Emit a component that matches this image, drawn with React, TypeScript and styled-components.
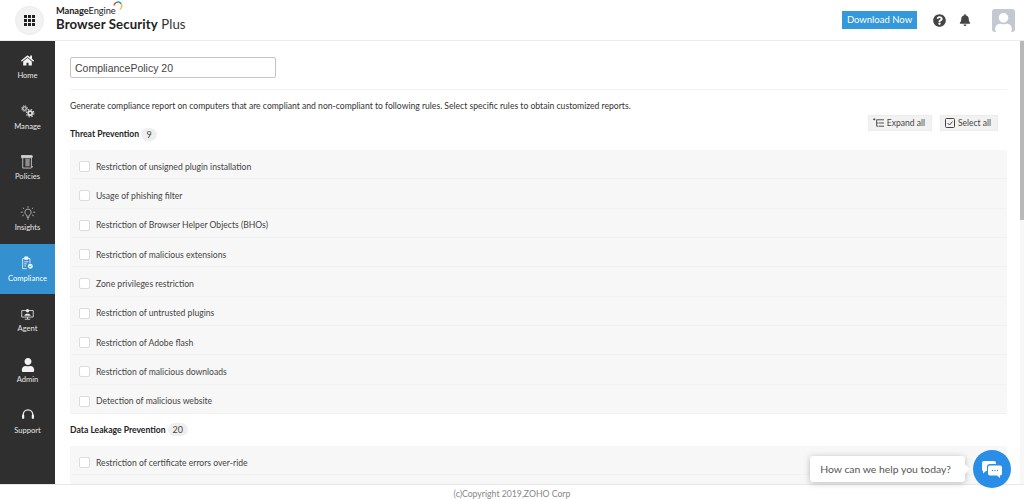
import React, { FC } from 'react'
import styled, { createGlobalStyle } from 'styled-components'
import { FaHome, FaUser, FaQuestionCircle, FaBell } from 'react-icons/fa'

const threatRules = [
  'Restriction of unsigned plugin installation',
  'Usage of phishing filter',
  'Restriction of Browser Helper Objects (BHOs)',
  'Restriction of malicious extensions',
  'Zone privileges restriction',
  'Restriction of untrusted plugins',
  'Restriction of Adobe flash',
  'Restriction of malicious downloads',
  'Detection of malicious website',
]

const leakageRules = ['Restriction of certificate errors over-ride']

const ManageIcon: FC = () => (
  <svg width="14" height="13" viewBox="0 0 16 15" fill="none" stroke="#dedede">
    <circle cx="4" cy="4" r="2" strokeWidth="1.300" />
    <circle cx="4" cy="4" r="3.300" strokeWidth="1" strokeDasharray="1.300 1.300" />
    <circle cx="10.500" cy="9.500" r="2.300" strokeWidth="2" />
    <circle cx="10.500" cy="9.500" r="4.300" strokeWidth="1.300" strokeDasharray="1.700 1.700" />
  </svg>
)

const PoliciesIcon: FC = () => (
  <svg width="13" height="14" viewBox="0 0 15 16" fill="none" stroke="#cfcfcf" strokeWidth="1">
    <path d="M0.500 0.500h11.500a1 1 0 0 1 0 2.500H0.500z" fill="#cfcfcf" />
    <path d="M2 3v12h9.500l2-1.500H12V3" />
    <path d="M5 4h5v9H5z" fill="#8c8c8c" stroke="none" />
  </svg>
)

const InsightsIcon: FC = () => (
  <svg width="16" height="14" viewBox="0 0 20 17" fill="none" stroke="#c8c8c8" strokeWidth="1">
    <path d="M10 3.500a4 4 0 0 0-2.300 7.200c.5.5.6 1 .6 1.800h3.400c0-.8.100-1.300.6-1.800A4 4 0 0 0 10 3.500z" />
    <path d="M8.500 14.300h3M9 16h2M10 0v2M3.500 2l1.700 1.400M16.500 2l-1.700 1.400M1 7.500h2.500M16.500 7.500H19M3 12l2-1.200M17 12l-2-1.200" />
  </svg>
)

const ComplianceIcon: FC = () => (
  <svg width="13" height="14" viewBox="0 0 16 17" fill="none" stroke="#f2f7fb" strokeWidth="1">
    <path d="M7 15.500H2V3h9v6" />
    <path d="M4.500 1h4v3h-4z" fill="#f2f7fb" />
    <path d="M4 7h5M4 9.500h3M4 12h2" />
    <circle cx="11.500" cy="12.500" r="3" fill="#f2f7fb" stroke="none" />
    <path d="M10 12.500l1.200 1.100 1.800-2" stroke="#3590cf" />
  </svg>
)

const AgentIcon: FC = () => (
  <svg width="13" height="12" viewBox="0 0 17 15" fill="none" stroke="#d8d8d8" strokeWidth="1.200">
    <path d="M1 3h15v8.500H1z" />
    <circle cx="8.500" cy="3.200" r="2.200" fill="#e8e8e8" stroke="none" />
    <path d="M4.500 9.800c0-3.400 8-3.400 8 0z" fill="#e8e8e8" stroke="none" />
    <path d="M8.500 11.500v2.500M5 14.300h7" />
  </svg>
)

const SupportIcon: FC = () => (
  <svg width="12" height="12" viewBox="0 0 14 14" fill="none" stroke="#f0f0f0" strokeWidth="1.500">
    <path d="M1.500 7.500V6.500a5.500 5.500 0 0 1 11 0v1" />
    <rect x="0" y="6.500" width="2.600" height="5" rx="1" fill="#f0f0f0" stroke="none" />
    <rect x="11.400" y="6.500" width="2.600" height="5" rx="1" fill="#f0f0f0" stroke="none" />
  </svg>
)

const navItems = [
  { label: 'Home', icon: <FaHome size={13} color="#f2f2f2" /> },
  { label: 'Manage', icon: <ManageIcon /> },
  { label: 'Policies', icon: <PoliciesIcon /> },
  { label: 'Insights', icon: <InsightsIcon /> },
  { label: 'Compliance', icon: <ComplianceIcon />, active: true },
  { label: 'Agent', icon: <AgentIcon /> },
  { label: 'Admin', icon: <FaUser size={14} color="#f2f2f2" /> },
  { label: 'Support', icon: <SupportIcon /> },
]

const RuleList: FC<{ rules: string[]; open?: boolean }> = ({ rules, open }) => (
  <Panel $open={open}>
    {rules.map((rule) => (
      <Rule key={rule}>
        <Check />
        <span>{rule}</span>
      </Rule>
    ))}
  </Panel>
)

const App: FC = () => (
  <Page>
    <GlobalStyle />
    <Header>
      <AppsButton>
        <AppsGrid>
          {Array.from({ length: 9 }).map((_, i) => (
            <i key={i} />
          ))}
        </AppsGrid>
      </AppsButton>
      <Brand>
        <Maker>
          <b>Manage</b>Engine
          <svg width="10" height="10" viewBox="0 0 10 10" fill="none" strokeWidth="1.400">
            <path d="M1 4.500a4 4 0 0 1 2-2.800" stroke="#e0403a" />
            <path d="M3 1.700a4.500 4.500 0 0 1 3-.7" stroke="#36a85a" />
            <path d="M6 1a4.500 4.500 0 0 1 2.300 2" stroke="#2f8fd8" />
            <path d="M8.300 3a4.500 4.500 0 0 1-1.300 5.500" stroke="#f2c230" />
          </svg>
        </Maker>
        <Product>
          <b>Browser Security</b> Plus
        </Product>
      </Brand>
      <HeaderRight>
        <DownloadButton>Download Now</DownloadButton>
        <FaQuestionCircle size={13} color="#444" />
        <FaBell size={12} color="#444" />
        <Avatar>
          <FaUser size={19} color="#fff" />
        </Avatar>
      </HeaderRight>
    </Header>
    <Body>
      <Sidebar>
        {navItems.map((item) => (
          <NavItem key={item.label} $active={item.active}>
            <NavIcon>{item.icon}</NavIcon>
            <span>{item.label}</span>
          </NavItem>
        ))}
      </Sidebar>
      <Content>
        <NameInput defaultValue="CompliancePolicy 20" />
        <Divider />
        <Description>
          Generate compliance report on computers that are compliant and non-compliant to following rules. Select specific rules to obtain customized reports.
        </Description>
        <SectionRow>
          <SectionTitle>
            Threat Prevention <Count>9</Count>
          </SectionTitle>
          <Actions>
            <ActionButton>
              <svg width="11" height="10" viewBox="0 0 12 10" fill="none" stroke="#444" strokeWidth="1">
                <path d="M0 1h2.500M1.500 0v2M4 1.500h8M6 5h6M6 8.500h6M4 1.500v7M4 5h1.500M4 8.500h1.500" />
              </svg>
              Expand all
            </ActionButton>
            <ActionButton>
              <svg width="10" height="10" viewBox="0 0 10 10" fill="none" stroke="#444" strokeWidth="1">
                <rect x="0.500" y="0.500" width="9" height="9" rx="1" />
                <path d="M2.500 5l2 2 3-3.500" />
              </svg>
              Select all
            </ActionButton>
          </Actions>
        </SectionRow>
        <RuleList rules={threatRules} />
        <SectionRow>
          <SectionTitle>
            Data Leakage Prevention <Count>20</Count>
          </SectionTitle>
        </SectionRow>
        <RuleList rules={leakageRules} open />
      </Content>
      <ScrollTrack>
        <ScrollThumb />
      </ScrollTrack>
    </Body>
    <Footer>(c)Copyright 2019,ZOHO Corp</Footer>
    <Chat>
      <ChatBubble>How can we help you today?</ChatBubble>
      <ChatButton>
        <svg width="20" height="17" viewBox="0 0 20 17">
          <path d="M2 0h10a2 2 0 0 1 2 2v1H8a3 3 0 0 0-3 3v4H4l-3 2.500V10a2 2 0 0 1-1-2V2a2 2 0 0 1 2-2z" fill="#fff" />
          <path d="M8 4.500h10a2 2 0 0 1 2 2v6a2 2 0 0 1-2 2v2.500L15 14.500H8a2 2 0 0 1-2-2v-6a2 2 0 0 1 2-2z" fill="#fff" />
          <circle cx="10.500" cy="9.500" r=".7" fill="#2a8ee6" />
          <circle cx="13" cy="9.500" r=".7" fill="#2a8ee6" />
          <circle cx="15.500" cy="9.500" r=".7" fill="#2a8ee6" />
        </svg>
      </ChatButton>
    </Chat>
  </Page>
)

const GlobalStyle = createGlobalStyle`
  html, body {
    margin: 0;
    height: 100%;
    overflow: hidden;
    background: #fff;
  }
  body {
    font-family: Lato, "Liberation Sans", sans-serif;
    color: #333;
  }
  * {
    box-sizing: border-box;
  }
`

const Page = styled.div`
  display: flex;
  flex-direction: column;
  height: 499px;
  position: relative;
`
const Header = styled.header`
  align-items: center;
  border-bottom: 1px solid #ececec;
  display: flex;
  flex: 0 0 41px;
  padding: 0 9px 0 15px;
`
const AppsButton = styled.div`
  align-items: center;
  background: #f2f2f2;
  border: 1px solid #ebebeb;
  border-radius: 50%;
  display: flex;
  height: 29px;
  justify-content: center;
  width: 29px;
`
const AppsGrid = styled.div`
  display: grid;
  gap: 1px;
  grid-template-columns: repeat(3, 3px);
  grid-auto-rows: 3px;
  i {
    background: #222;
  }
`
const Brand = styled.div`
  display: flex;
  flex-direction: column;
  margin-left: 12px;
  margin-top: -3px;
`
const Maker = styled.div`
  align-items: flex-start;
  color: #222;
  display: flex;
  font-size: 9.300px;
  letter-spacing: -0.100px;
  line-height: 12px;
  b {
    font-weight: 700;
  }
  svg {
    margin-left: -3px;
    margin-top: -4px;
  }
`
const Product = styled.div`
  color: #333;
  font-size: 13.200px;
  letter-spacing: 0.100px;
  line-height: 15px;
  b {
    color: #222;
    font-weight: 700;
  }
`
const HeaderRight = styled.div`
  align-items: center;
  display: flex;
  margin-left: auto;
`
const DownloadButton = styled.div`
  background: #3498db;
  color: #fff;
  font-size: 9.500px;
  height: 18px;
  line-height: 18px;
  margin-right: 16px;
  text-align: center;
  white-space: nowrap;
  width: 75px;
  & + svg {
    margin-right: 13px;
  }
`
const Avatar = styled.div`
  align-items: flex-end;
  background: #c3c8d1;
  border-radius: 3px;
  display: flex;
  height: 23px;
  justify-content: center;
  margin-left: 21px;
  overflow: hidden;
  width: 23px;
`
const Body = styled.div`
  display: flex;
  flex: 1;
  min-height: 0;
  position: relative;
`
const Sidebar = styled.nav`
  background: #2f2f2f;
  flex: 0 0 55px;
`
const NavItem = styled.div<{ $active?: boolean }>`
  align-items: center;
  background: ${(p) => (p.$active ? '#3590cf' : 'transparent')};
  color: ${(p) => (p.$active ? '#fff' : '#e6e6e6')};
  display: flex;
  flex-direction: column;
  font-size: 7.600px;
  height: 50.700px;
  padding-top: 11px;
`
const NavIcon = styled.div`
  align-items: center;
  display: flex;
  height: 17px;
  justify-content: center;
  margin-bottom: 1px;
`
const Content = styled.main`
  flex: 1;
  min-width: 0;
  overflow: hidden;
  padding: 16px 17px 0 15px;
`
const ScrollTrack = styled.div`
  background: #f7f7f7;
  bottom: 0;
  position: absolute;
  right: 0;
  top: 0;
  width: 4px;
`
const ScrollThumb = styled.div`
  background: #b8b8b8;
  height: 179px;
`
const NameInput = styled.input`
  border: 1px solid #c4c4c4;
  border-radius: 2px;
  color: #444;
  display: block;
  font-family: "Liberation Sans", Arial, sans-serif;
  font-size: 10.500px;
  height: 21px;
  outline: none;
  padding: 0 4px;
  width: 206px;
`
const Divider = styled.div`
  background: #f2f2f2;
  height: 1px;
  margin-top: 11px;
`
const Description = styled.p`
  color: #333;
  font-size: 8.600px;
  line-height: 12px;
  margin: 10px 0 6px;
`
const SectionRow = styled.div`
  align-items: center;
  display: flex;
  height: 32px;
  justify-content: space-between;
`
const SectionTitle = styled.h3`
  align-items: center;
  color: #222;
  display: flex;
  font-size: 8.600px;
  font-weight: 700;
  gap: 2px;
  margin: 0;
`
const Count = styled.span`
  background: #efefef;
  border-radius: 7px;
  color: #444;
  font-size: 9px;
  font-weight: 400;
  height: 13px;
  line-height: 13px;
  min-width: 16px;
  padding: 0 5px;
  text-align: center;
`
const Actions = styled.div`
  display: flex;
  gap: 8px;
  margin-right: 9px;
  margin-top: -22px;
`
const ActionButton = styled.div`
  align-items: center;
  background: #f2f2f2;
  border: 1px solid #ececec;
  color: #444;
  display: flex;
  font-size: 8.500px;
  gap: 3px;
  height: 16px;
  padding: 0 6px 0 4px;
`
const Panel = styled.div<{ $open?: boolean }>`
  background: #f7f7f7;
  padding-bottom: ${(p) => (p.$open ? '30px' : '0')};
`
const Rule = styled.div`
  align-items: center;
  border-bottom: 1px solid #f1f1f1;
  color: #444;
  display: flex;
  font-size: 8.600px;
  height: 29.330px;
  padding: 5px 0 0 9px;
`
const Check = styled.div`
  background: #fff;
  border: 1px solid #dcdcdc;
  border-radius: 2px;
  height: 11px;
  margin-right: 6px;
  width: 11px;
`
const Footer = styled.footer`
  background: #fff;
  border-top: 1px solid #e6e6e6;
  color: #888;
  flex: 0 0 15px;
  font-size: 8.700px;
  line-height: 18px;
  overflow: hidden;
  text-align: center;
`
const Chat = styled.div`
  align-items: center;
  bottom: 11px;
  display: flex;
  position: absolute;
  right: 13px;
`
const ChatBubble = styled.div`
  background: #fff;
  border-radius: 3px;
  box-shadow: 0 1px 6px rgba(0, 0, 0, 0.25);
  color: #555;
  font-size: 10.400px;
  height: 26px;
  line-height: 26px;
  margin-right: 8px;
  padding: 0 14px 0 10px;
  position: relative;
  white-space: nowrap;
  &::after {
    background: #fff;
    content: '';
    height: 8px;
    position: absolute;
    right: -3px;
    top: 9px;
    transform: rotate(45deg);
    width: 8px;
  }
`
const ChatButton = styled.div`
  align-items: center;
  background: #2a8ee6;
  border-radius: 50%;
  display: flex;
  height: 38px;
  justify-content: center;
  width: 38px;
`

export default App
